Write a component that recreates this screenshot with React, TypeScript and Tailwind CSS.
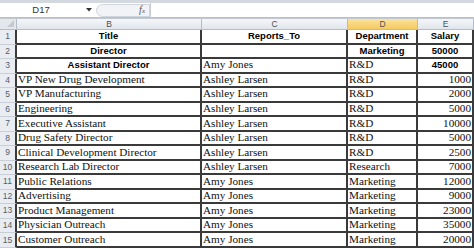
import React from "react";

type Row = {
  title: string;
  reports: string;
  dept: string;
  salary: string;
  head?: boolean;
};

const rows: Row[] = [
  { title: "Title", reports: "Reports_To", dept: "Department", salary: "Salary", head: true },
  { title: "Director", reports: "", dept: "Marketing", salary: "50000", head: true },
  { title: "Assistant Director", reports: "Amy Jones", dept: "R&D", salary: "45000", head: true },
  { title: "VP New Drug Development", reports: "Ashley Larsen", dept: "R&D", salary: "1000" },
  { title: "VP Manufacturing", reports: "Ashley Larsen", dept: "R&D", salary: "2000" },
  { title: "Engineering", reports: "Ashley Larsen", dept: "R&D", salary: "5000" },
  { title: "Executive Assistant", reports: "Ashley Larsen", dept: "R&D", salary: "10000" },
  { title: "Drug Safety Director", reports: "Ashley Larsen", dept: "R&D", salary: "5000" },
  { title: "Clinical Development Director", reports: "Ashley Larsen", dept: "R&D", salary: "2500" },
  { title: "Research Lab Director", reports: "Ashley Larsen", dept: "Research", salary: "7000" },
  { title: "Public Relations", reports: "Amy Jones", dept: "Marketing", salary: "12000" },
  { title: "Advertising", reports: "Amy Jones", dept: "Marketing", salary: "9000" },
  { title: "Product Management", reports: "Amy Jones", dept: "Marketing", salary: "23000" },
  { title: "Physician Outreach", reports: "Amy Jones", dept: "Marketing", salary: "35000" },
  { title: "Customer Outreach", reports: "Amy Jones", dept: "Marketing", salary: "20000" },
];

const bold = "font-['Liberation_Sans',Arial,sans-serif] font-bold text-[9.5px] text-black justify-center pb-[2px]";
const serif = "font-['Liberation_Serif','Times_New_Roman',serif] text-[11.2px] text-[#111] pb-[1px]";
const cell = "flex items-end leading-none overflow-hidden whitespace-nowrap border-r-2 border-b-2 border-[#3a3a3a]";

const FormulaBar = () => (
  <div className="h-[18px] flex flex-col bg-[#dfe3e8]">
    <div className="h-[3px] bg-[#d3d8df]" />
    <div className="flex-1 flex items-center bg-white border-b border-[#b9c0c9]">
      <div className="w-[82px] text-center leading-none font-['Liberation_Sans',Arial,sans-serif] text-[9.5px] text-[#333]">D17</div>
      <div className="w-[14px] flex justify-center">
        <svg width="6" height="4" viewBox="0 0 6 4">
          <path d="M0 0h6L3 3.5z" fill="#333" />
        </svg>
      </div>
      <div className="h-[13px] w-[54px] flex items-center justify-end pr-[4px] rounded-l-full bg-[#f1f3f6] border border-[#cfd5dc]">
        <span className="leading-none font-['Liberation_Serif',serif] italic text-[10px] text-[#555]">
          f<span className="text-[7px]">x</span>
        </span>
      </div>
      <div className="flex-1 h-full border-l border-[#c7ccd3] bg-white" />
    </div>
  </div>
);

export default function App() {
  return (
    <div className="w-[474px] h-[248px] overflow-hidden bg-white">
      <FormulaBar />
      <div className="h-[1px] bg-[#c3c9d1]" />
      <div className="grid grid-cols-[17px_185px_146px_70px_56px] grid-rows-[11px_repeat(15,minmax(0,1fr))] h-[229px]">
        {/* column headers */}
        <div className="relative bg-[#e4e8ed] border-r border-b border-[#b4bcc7]">
          <svg className="absolute right-[2px] bottom-[2px]" width="7" height="7" viewBox="0 0 7 7">
            <path d="M7 0v7H0z" fill="#c3c9d1" />
          </svg>
        </div>
        {["B", "C", "D", "E"].map((c) => (
          <div
            key={c}
            className={
              "flex items-center justify-center leading-none border-r border-b border-[#b4bcc7] font-['Liberation_Sans',Arial,sans-serif] text-[8.5px] text-[#4a4f57] " +
              (c === "D" ? "bg-gradient-to-b from-[#fbe29a] to-[#f5c95e]" : "bg-gradient-to-b from-[#f4f6f9] to-[#e1e6ec]")
            }
          >
            {c}
          </div>
        ))}
        {rows.map((r, i) => (
          <React.Fragment key={i}>
            <div className="flex items-end justify-center pb-[3px] leading-none bg-[#e9ecf0] border-b border-[#c9cfd7] border-r-2 border-r-[#3a3a3a] font-['Liberation_Sans',Arial,sans-serif] text-[8.5px] text-[#555f6d]">
              {i + 1}
            </div>
            <div className={cell + " " + (r.head ? bold : serif + " pl-[1px]")}>{r.title}</div>
            <div className={cell + " " + (i === 0 ? bold : serif + " pl-[1px]")}>{r.reports}</div>
            <div className={cell + " " + (i < 2 ? bold : serif + " pl-[1px]")}>{r.dept}</div>
            <div className={cell + " " + (r.head ? bold : serif + " justify-end pr-[1px]")}>{r.salary}</div>
          </React.Fragment>
        ))}
      </div>
    </div>
  );
}
